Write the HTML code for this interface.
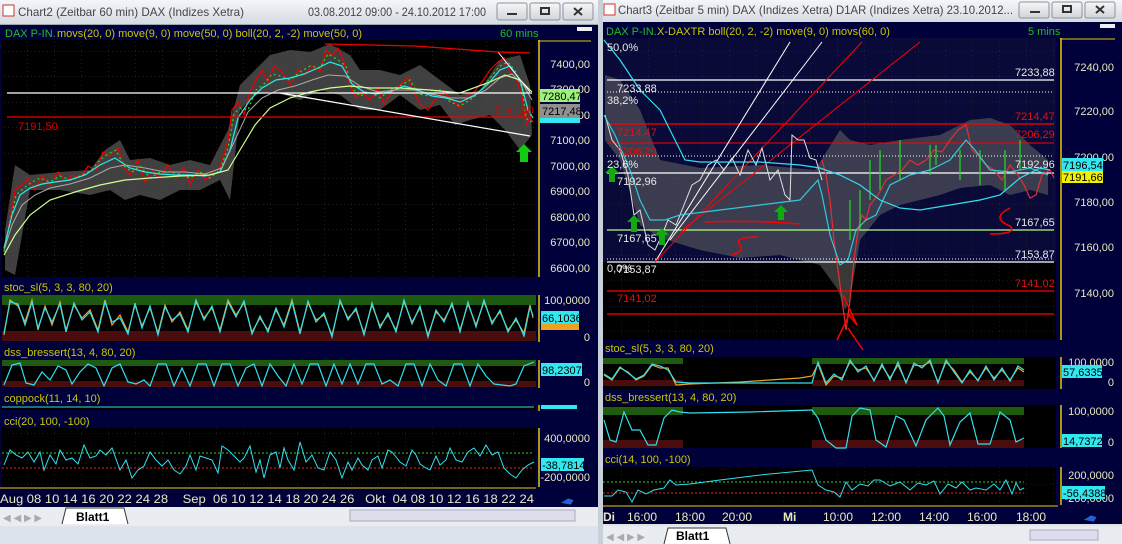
<!DOCTYPE html>
<html><head><meta charset="utf-8"><style>
html,body{margin:0;padding:0;background:#d4d0c8;}
svg{display:block;font-family:"Liberation Sans",sans-serif;}
</style></head><body>
<svg width="1122" height="544" viewBox="0 0 1122 544" xmlns="http://www.w3.org/2000/svg">
<defs>
<linearGradient id="tb" x1="0" y1="0" x2="0" y2="1"><stop offset="0" stop-color="#f4f6f9"/><stop offset="1" stop-color="#d6dbe2"/></linearGradient>
<linearGradient id="btn" x1="0" y1="0" x2="0" y2="1"><stop offset="0" stop-color="#f6f6f6"/><stop offset="1" stop-color="#d0d4da"/></linearGradient>
<pattern id="g" width="27" height="25.5" patternUnits="userSpaceOnUse"><path d="M0 0H27M0 0V25.5" stroke="#3a3a3a" stroke-width="1" stroke-dasharray="1,3" fill="none"/></pattern>
</defs>
<rect width="1122" height="544" fill="#dfe3e8"/>

<!-- ========== LEFT WINDOW ========== -->
<rect x="0" y="0" width="598" height="24" fill="url(#tb)"/>
<rect x="3" y="5" width="11" height="11" fill="#fff" stroke="#c33" stroke-width="1"/>
<text x="18" y="16" font-size="12" fill="#444" textLength="226" lengthAdjust="spacingAndGlyphs">Chart2 (Zeitbar 60 min)  DAX (Indizes Xetra)</text>
<text x="308" y="16" font-size="12" fill="#444" textLength="178" lengthAdjust="spacingAndGlyphs">03.08.2012 09:00 - 24.10.2012 17:00</text>
<g stroke="#8a929c" fill="url(#btn)"><rect x="497" y="3" width="30" height="17" rx="2"/><rect x="530" y="3" width="30" height="17" rx="2"/><rect x="563" y="3" width="30" height="17" rx="2"/></g>
<path d="M507 14h10M541 8h8v6h-8zM574 8l8 7M582 8l-8 7" stroke="#333" stroke-width="2" fill="none"/>
<rect x="0" y="24" width="598" height="483" fill="#00003a"/>
<rect x="0" y="24" width="598" height="1" fill="#9aa"/>
<text x="5" y="37" font-size="11" fill="#20c020">DAX P-IN.</text>
<text x="57" y="37" font-size="11" fill="#c8c800">movs(20, 0) move(9, 0) move(50, 0) boll(20, 2, -2) move(50, 0)</text>
<text x="500" y="37" font-size="11" fill="#20c020">60 mins</text>
<rect x="577" y="27" width="15" height="4" fill="#eee"/>
<!-- price chart -->
<rect x="2" y="40" width="534" height="237" fill="#000"/>
<rect x="2" y="40" width="534" height="237" fill="url(#g)"/>
<path d="M5 230 L15 165 L30 175 L60 172 L90 170 L105 150 L120 140 L130 160 L150 158 L170 165 L190 160 L210 165 L228 130 L240 85 L255 70 L270 55 L290 50 L310 52 L330 44 L350 55 L360 70 L380 70 L400 75 L420 65 L440 80 L460 95 L480 90 L500 60 L520 55 L530 85 L532 135 L520 150 L505 130 L490 115 L470 120 L455 125 L440 105 L420 110 L400 95 L380 110 L360 110 L340 95 L320 90 L300 100 L285 95 L270 92 L255 95 L240 110 L230 200 L220 180 L200 190 L180 190 L160 200 L140 195 L125 200 L110 190 L90 195 L60 190 L30 190 L15 275 L5 270Z" fill="#555" opacity="0.75"/>
<g stroke-width="1.2" fill="none">
<polyline points="4,250 10,220 15,190 22,185 28,178 35,190 42,175 50,185 58,172 66,182 72,175 80,178 88,166 96,170 103,152 110,156 118,148 124,168 130,175 138,160 145,182 152,170 160,178 168,165 176,178 184,168 190,185 198,170 205,180 212,172 220,168 228,140 232,110 238,102 244,115 250,92 256,80 262,70 268,82 274,66 282,72 290,85 298,70 304,75 312,66 320,72 326,50 332,55 338,48 344,62 350,85 356,98 362,92 370,100 378,88 384,104 392,92 400,85 408,78 414,92 420,104 428,110 436,98 444,92 452,100 460,108 466,96 474,92 482,82 490,70 498,62 504,58 510,72 516,78 522,96 526,125 530,118 533,122" stroke="#e00"/>
<polyline points="4,252 10,222 16,195 24,188 32,182 40,178 50,182 60,176 70,180 80,176 92,170 100,160 108,154 116,150 124,166 132,172 140,166 150,178 160,172 170,172 180,174 190,178 200,172 210,178 220,170 228,148 234,114 240,108 248,110 256,90 264,84 272,74 280,76 290,80 300,72 310,66 320,68 328,54 338,60 346,66 352,88 360,96 370,92 380,98 390,90 400,86 410,80 418,94 430,96 440,90 450,102 460,106 470,100 480,92 490,78 500,66 508,62 516,72 522,88 526,118 530,122 533,120" stroke="#2d2" stroke-dasharray="2,3"/>
<polyline points="4,248 12,215 20,195 30,188 42,184 55,182 70,180 85,175 100,165 115,158 130,168 145,172 160,174 175,175 190,175 205,176 220,172 230,150 238,118 250,100 262,88 276,80 290,78 304,74 318,68 330,62 342,66 352,84 364,92 376,94 390,92 404,86 418,90 432,96 446,98 460,102 474,96 488,84 500,70 510,66 520,80 528,110 533,118" stroke="#2ee"/>
<polyline points="4,250 12,225 22,205 35,195 50,188 70,184 90,178 110,168 125,165 145,168 165,172 185,172 205,174 222,168 235,140 248,112 262,98 278,90 295,86 312,80 328,75 345,76 360,86 378,92 396,90 414,90 432,94 450,98 468,98 486,90 500,78 512,74 524,86 532,100" stroke="#aaa" stroke-width="1"/>
<polyline points="4,255 15,235 30,215 50,200 75,192 100,185 125,180 150,178 180,176 210,175 228,170 240,150 255,125 270,108 290,98 310,92 330,88 350,86 370,88 400,88 430,90 460,93 490,82 505,75 520,80 532,92" stroke="#cfff90"/>
</g>
<line x1="7" y1="93" x2="532" y2="93" stroke="#fff" stroke-width="1.2"/>
<line x1="7" y1="117" x2="532" y2="117" stroke="#e00" stroke-width="1.2"/>
<line x1="280" y1="93" x2="530" y2="136" stroke="#fff" stroke-width="1.2"/>
<line x1="498" y1="52" x2="530" y2="92" stroke="#fff" stroke-width="1"/>
<polyline points="325,44 415,46 498,52 530,53" stroke="#e00" stroke-width="1.2" fill="none"/>
<text x="18" y="130" font-size="11" fill="#d00">7191,50</text>
<text x="494" y="114" font-size="11" fill="#d00">7191,50</text>
<path d="M520 162v-10h-4l8-8 8 8h-4v10z" fill="#1c1"/>
<!-- left price axis -->
<rect x="538" y="40" width="53" height="237" fill="#00003a"/>
<line x1="539" y1="40" x2="539" y2="277" stroke="#e8c800" stroke-width="1.5"/>
<line x1="538" y1="41" x2="591" y2="41" stroke="#e8c800"/>
<g font-size="11" fill="#e8e8c0" text-anchor="end">
<text x="590" y="68">7400,00</text><text x="590" y="93">7300,00</text><text x="590" y="119">7200,00</text><text x="590" y="144">7100,00</text><text x="590" y="170">7000,00</text><text x="590" y="195">6900,00</text><text x="590" y="221">6800,00</text><text x="590" y="246">6700,00</text><text x="590" y="272">6600,00</text>
</g>
<rect x="540" y="89" width="40" height="13" fill="#a0f080"/><text x="542" y="100" font-size="11" fill="#000">7280,47</text>
<rect x="540" y="104" width="40" height="14" fill="#909090"/><text x="542" y="115" font-size="11" fill="#000">7217,48</text>
<rect x="540" y="118" width="40" height="5" fill="#30e8f0"/>
<!-- stoc -->
<text x="4" y="291" font-size="11" fill="#c8c800">stoc_sl(5, 3, 3, 80, 20)</text>
<rect x="2" y="295" width="534" height="47" fill="#000"/>
<rect x="2" y="295" width="534" height="10" fill="#1e5a10"/>
<rect x="2" y="331" width="534" height="10" fill="#4a0c0c"/>
<polyline fill="none" stroke="#f0a020" stroke-width="1.2" points="4,335 10,300 18,306 25,322 32,300 38,330 45,306 52,325 60,302 66,330 74,305 82,318 90,310 98,330 105,300 112,325 120,315 128,332 135,305 142,326 150,308 158,333 165,305 172,322 180,312 188,330 196,302 204,318 212,308 220,330 228,300 236,315 244,303 252,332 260,318 268,330 276,310 284,325 292,300 300,332 308,303 316,320 324,315 332,335 340,302 348,318 356,310 364,333 372,305 380,326 388,315 396,330 404,302 412,322 420,308 428,335 436,312 444,320 452,305 460,330 468,304 476,325 484,302 492,322 500,312 508,330 516,320 524,333 530,305 533,318"/>
<polyline fill="none" stroke="#30e0f0" stroke-width="1.2" points="4,333 10,302 18,304 25,325 32,302 38,328 45,308 52,322 60,304 66,332 74,303 82,320 90,312 98,332 105,302 112,322 120,318 128,334 135,303 142,328 150,306 158,335 165,307 172,320 180,314 188,332 196,300 204,320 212,306 220,332 228,302 236,317 244,301 252,334 260,316 268,332 276,308 284,327 292,302 300,334 308,301 316,322 324,313 332,337 340,300 348,320 356,308 364,335 372,303 380,328 388,313 396,332 404,300 412,324 420,306 428,337 436,310 444,322 452,303 460,332 468,302 476,327 484,300 492,324 500,310 508,332 516,318 524,336 530,307 533,316"/>
<rect x="538" y="295" width="53" height="47" fill="#00003a"/>
<line x1="539" y1="295" x2="539" y2="342" stroke="#e8c800" stroke-width="1.5"/>
<text x="590" y="304" font-size="11" fill="#e8e8c0" text-anchor="end">100,0000</text>
<text x="590" y="341" font-size="11" fill="#e8e8c0" text-anchor="end">0</text>
<rect x="541" y="311" width="38" height="13" fill="#30e8f0"/><text x="542" y="322" font-size="11" fill="#000">66,1036</text>
<rect x="541" y="324" width="38" height="6" fill="#f0a020"/>
<!-- dss -->
<text x="4" y="356" font-size="11" fill="#c8c800">dss_bressert(13, 4, 80, 20)</text>
<rect x="2" y="360" width="534" height="28" fill="#000"/>
<rect x="2" y="360" width="534" height="6" fill="#1e5a10"/>
<rect x="2" y="381" width="534" height="6" fill="#4a0c0c"/>
<polyline fill="none" stroke="#30e0f0" stroke-width="1.2" points="4,385 12,365 20,363 26,383 34,385 42,372 50,380 58,366 66,370 72,384 80,372 88,364 96,368 104,386 112,368 120,364 128,382 136,384 144,380 150,386 158,364 166,364 174,386 182,368 190,386 198,364 206,364 214,386 222,364 230,364 238,386 246,368 254,364 262,386 270,364 278,376 286,386 294,364 302,384 310,364 318,364 326,386 334,364 342,384 350,364 358,384 366,364 374,364 382,384 390,380 398,386 406,364 414,364 422,386 430,364 438,380 446,386 454,364 462,364 470,386 478,364 486,376 494,384 502,385 510,386 516,384 524,366 534,362"/>
<rect x="538" y="360" width="53" height="28" fill="#00003a"/>
<line x1="539" y1="360" x2="539" y2="388" stroke="#e8c800" stroke-width="1.5"/>
<text x="590" y="386" font-size="11" fill="#e8e8c0" text-anchor="end">0</text>
<rect x="541" y="363" width="41" height="13" fill="#30e8f0"/><text x="542" y="374" font-size="11" fill="#000">98,2307</text>
<!-- coppock -->
<text x="4" y="402" font-size="11" fill="#c8c800">coppock(11, 14, 10)</text>
<rect x="2" y="405" width="534" height="5" fill="#000"/>
<line x1="2" y1="407" x2="534" y2="407" stroke="#30e0f0"/>
<rect x="538" y="405" width="53" height="6" fill="#00003a"/>
<line x1="539" y1="405" x2="539" y2="411" stroke="#e8c800" stroke-width="1.5"/>
<rect x="541" y="405" width="36" height="4" fill="#30e8f0"/>
<!-- cci -->
<text x="4" y="425" font-size="11" fill="#c8c800">cci(20, 100, -100)</text>
<rect x="2" y="428" width="534" height="59" fill="#000"/>
<rect x="2" y="428" width="534" height="59" fill="url(#g)" opacity="0.8"/>
<line x1="2" y1="453" x2="534" y2="453" stroke="#3c3" stroke-dasharray="2,2"/>
<line x1="2" y1="468" x2="534" y2="468" stroke="#e22" stroke-dasharray="2,2"/>
<polyline fill="none" stroke="#30e0f0" stroke-width="1" points="4,465 10,450 16,455 22,458 28,452 34,462 40,452 44,470 50,455 56,464 60,450 66,460 72,458 78,464 84,445 90,458 96,456 100,450 106,455 112,448 120,470 126,460 132,478 138,470 144,466 150,452 156,460 162,466 168,460 174,470 180,474 186,466 190,455 196,470 200,456 206,458 212,460 218,473 222,446 228,450 234,456 240,462 244,458 250,446 256,472 260,460 264,478 270,455 276,452 280,468 284,448 288,460 294,470 300,442 306,462 312,455 318,468 324,470 330,452 336,460 342,478 348,462 352,470 358,458 362,465 368,470 372,460 378,456 382,468 388,450 392,452 400,462 406,466 412,450 416,455 420,464 426,468 430,470 436,456 440,465 446,460 450,448 456,460 462,462 468,452 474,448 480,456 486,445 492,455 498,452 504,468 510,474 516,478 522,470 528,465 534,462"/>
<rect x="538" y="428" width="53" height="59" fill="#00003a"/>
<line x1="539" y1="428" x2="539" y2="487" stroke="#e8c800" stroke-width="1.5"/>
<text x="590" y="442" font-size="11" fill="#e8e8c0" text-anchor="end">400,0000</text>
<text x="590" y="481" font-size="11" fill="#e8e8c0" text-anchor="end">-200,0000</text>
<rect x="541" y="458" width="43" height="13" fill="#30e8f0"/><text x="542" y="469" font-size="11" fill="#000">-38,7814</text>
<!-- date axis -->
<line x1="0" y1="488" x2="536" y2="488" stroke="#e8c800"/>
<text x="0" y="503" font-size="12" fill="#e8e8c0" textLength="534" lengthAdjust="spacingAndGlyphs" xml:space="preserve">Aug 08 10 14 16 20 22 24 28    Sep  06 10 12 14 18 20 24 26   Okt  04 08 10 12 16 18 22 24</text>
<path d="M560 503l8-5 6 2-3 5z" fill="#2060e0" stroke="#000" stroke-width="0.6"/>
<!-- tab bar -->
<rect x="0" y="507" width="598" height="19" fill="#e9ecf0"/>
<text x="3" y="521" font-size="10" fill="#aaa">◀ ◀ ▶ ▶</text>
<path d="M62 524l4-16h58l4 16" fill="#fff" stroke="#333"/>
<text x="76" y="521" font-size="12" font-weight="bold" fill="#000">Blatt1</text>
<rect x="350" y="510" width="225" height="11" fill="#dde" stroke="#aab"/>
<rect x="0" y="527" width="598" height="17" fill="#dce3ec"/>
<!-- ========== RIGHT WINDOW ========== -->
<rect x="598" y="0" width="5" height="544" fill="#c8d0da"/>
<rect x="603" y="0" width="519" height="22" fill="url(#tb)"/>
<rect x="604" y="4" width="11" height="11" fill="#fff" stroke="#c33"/>
<text x="618" y="14" font-size="12" fill="#444" textLength="395" lengthAdjust="spacingAndGlyphs">Chart3 (Zeitbar 5 min)  DAX (Indizes Xetra) D1AR (Indizes Xetra) 23.10.2012...</text>
<g stroke="#8a929c" fill="url(#btn)"><rect x="1019" y="2" width="30" height="16" rx="2"/><rect x="1052" y="2" width="30" height="16" rx="2"/><rect x="1085" y="2" width="30" height="16" rx="2"/></g>
<path d="M1030 12h10M1063 6h8v6h-8zM1096 6l8 7M1104 6l-8 7" stroke="#333" stroke-width="2" fill="none"/>
<rect x="603" y="22" width="519" height="502" fill="#00003a"/>
<text x="606" y="35" font-size="11" fill="#20c020">DAX P-IN.</text>
<text x="657" y="35" font-size="11" fill="#c8c800">X-DAXTR boll(20, 2, -2) move(9, 0) movs(60, 0)</text>
<text x="1028" y="35" font-size="11" fill="#20c020">5 mins</text>
<rect x="1100" y="24" width="15" height="4" fill="#eee"/>
<!-- right price chart -->
<rect x="603" y="38" width="453" height="302" fill="#0a0a38"/>
<rect x="603" y="262" width="453" height="78" fill="#000"/>
<rect x="603" y="38" width="453" height="302" fill="url(#g)" opacity="0.8"/>
<path d="M605 75 L620 80 L640 110 L660 160 L700 168 L760 165 L815 170 L840 130 L850 140 L870 145 L900 140 L940 135 L970 120 L990 118 L1010 125 L1030 145 L1048 160 L1048 195 L1030 190 L1010 195 L990 185 L960 188 L940 195 L900 205 L880 215 L860 240 L850 300 L845 310 L838 290 L820 265 L800 260 L780 255 L740 258 L700 250 L660 238 L640 225 L620 160 L605 140Z" fill="#666" opacity="0.55"/>
<!-- fib lines -->
<line x1="607" y1="80" x2="1054" y2="80" stroke="#fff" stroke-width="1.2"/>
<line x1="607" y1="92" x2="1054" y2="92" stroke="#fff" stroke-dasharray="1,2"/>
<line x1="607" y1="124" x2="1054" y2="124" stroke="#f00" stroke-width="1.2"/>
<line x1="607" y1="143" x2="1054" y2="143" stroke="#f00"/>
<line x1="607" y1="156" x2="1054" y2="156" stroke="#fff" stroke-dasharray="1,2"/>
<line x1="607" y1="173" x2="1054" y2="173" stroke="#fff" stroke-width="1.2"/>
<line x1="607" y1="230" x2="1054" y2="230" stroke="#b0ff90" stroke-width="1.2"/>
<line x1="607" y1="259" x2="1054" y2="259" stroke="#fff" stroke-dasharray="1,2"/>
<line x1="607" y1="262" x2="1054" y2="262" stroke="#fff" stroke-width="1.2"/>
<line x1="607" y1="291" x2="1054" y2="291" stroke="#f00" stroke-width="1.2"/>
<line x1="607" y1="314" x2="1054" y2="314" stroke="#f00" stroke-width="1.2"/>
<!-- channel lines -->
<line x1="655" y1="262" x2="790" y2="42" stroke="#fff"/>
<line x1="670" y1="240" x2="822" y2="42" stroke="#fff"/>
<line x1="655" y1="262" x2="862" y2="42" stroke="#f00"/>
<line x1="680" y1="232" x2="920" y2="42" stroke="#f00"/>
<!-- price bars -->
<polyline fill="none" stroke="#e0e0e0" stroke-width="1" points="605,115 612,140 620,150 628,175 634,215 640,210 648,245 655,250 662,235 668,220 676,225 684,205 692,185 700,180 708,165 716,160 724,170 732,158 740,175 748,150 756,165 762,148 770,180 778,170 785,195 790,200 792,135 798,140 804,140 810,158 816,160 822,180"/>
<polyline fill="none" stroke="#e03030" stroke-width="1.2" points="822,160 826,175 830,200 834,240 838,270 842,300 846,330 850,300 854,260 858,230 862,215 866,220 870,205 878,195 886,180 894,175 902,170 910,160 918,165 926,160 934,150 942,152 950,140 958,130 966,125 972,150 978,155 986,165 994,170 1002,180 1010,165 1018,175 1024,185 1030,198 1036,195 1042,175 1050,170 1054,178"/>
<g stroke-width="1.2"><path d="M880 150v40M900 140v40M930 145v30M980 150v35M960 150v30M1005 150v40M1020 140v30M936 145v20M860 190v40M850 200v40M870 160v40" stroke="#2d2"/></g>
<polyline fill="none" stroke="#30e0f0" stroke-width="1.2" points="604,40 620,60 640,90 660,110 675,140 685,160 700,162 760,162 800,165 820,168 840,175 860,185 880,200 900,208 920,210 950,205 980,200 1000,195 1020,178 1040,168 1050,170"/>
<polyline fill="none" stroke="#30e0f0" stroke-width="1.2" opacity="0.85" points="604,115 615,135 630,170 640,200 650,220 665,220 680,215 720,210 760,205 800,200 818,180 822,195 830,235 840,265 848,260 856,230 866,220 876,215 890,185 910,175 930,170 950,160 966,140 975,150 990,170 1010,172 1030,168 1048,175"/>
<!-- green arrows -->
<g fill="#1a1"><path d="M609 182v-9h-4l7-7 7 7h-4v9z"/><path d="M631 232v-10h-4l7-7 7 7h-4v10z"/><path d="M659 245v-10h-4l7-7 7 7h-4v10z"/><path d="M778 220v-8h-4l7-7 7 7h-4v8z"/></g>
<!-- red hand-drawn -->
<g stroke="#f00" stroke-width="1.5" fill="none">
<path d="M705 222q50 -2 95 2"/><path d="M758 237q-25 0 -18 8 5 6 -8 10"/>
<path d="M1010 208q-20 10 0 18 8 8 -20 8"/>
<path d="M837 340l12-25 8 10-14-30M863 350l-15-22"/>
</g>
<!-- labels -->
<g font-size="11" fill="#e8e8e8">
<text x="607" y="51">50,0%</text><text x="617" y="92">7233,88</text><text x="607" y="104">38,2%</text>
<text x="607" y="168">23,6%</text><text x="617" y="185">7192,96</text><text x="617" y="242">7167,65</text>
<text x="607" y="272">0,0%</text><text x="617" y="273">7153,87</text>
<text x="1015" y="76">7233,88</text><text x="1015" y="168">7192,96</text><text x="1015" y="226">7167,65</text><text x="1015" y="258">7153,87</text>
</g>
<g font-size="11" fill="#e01010">
<text x="617" y="136">7214,47</text><text x="617" y="155">7206,29</text><text x="617" y="302">7141,02</text>
<text x="1015" y="120">7214,47</text><text x="1015" y="138">7206,29</text><text x="1015" y="287">7141,02</text>
</g>
<!-- right price axis -->
<rect x="1060" y="38" width="55" height="302" fill="#00003a"/>
<line x1="1061" y1="38" x2="1061" y2="340" stroke="#e8c800" stroke-width="1.5"/>
<line x1="1060" y1="39" x2="1115" y2="39" stroke="#e8c800"/>
<g font-size="11" fill="#e8e8c0" text-anchor="end">
<text x="1114" y="71">7240,00</text><text x="1114" y="115">7220,00</text><text x="1114" y="161">7200,00</text><text x="1114" y="206">7180,00</text><text x="1114" y="251">7160,00</text><text x="1114" y="297">7140,00</text>
</g>
<rect x="1062" y="158" width="41" height="13" fill="#30e8f0"/><text x="1063" y="169" font-size="11" fill="#000">7196,54</text>
<rect x="1062" y="171" width="41" height="12" fill="#f0f000"/><text x="1063" y="181" font-size="11" fill="#000">7191,66</text>
<!-- right stoc -->
<text x="605" y="352" font-size="11" fill="#c8c800">stoc_sl(5, 3, 3, 80, 20)</text>
<rect x="603" y="357" width="453" height="32" fill="#000"/>
<rect x="603" y="358" width="80" height="6" fill="#1e5a10"/><rect x="812" y="358" width="212" height="6" fill="#1e5a10"/>
<rect x="603" y="380" width="80" height="6" fill="#4a0c0c"/><rect x="812" y="380" width="212" height="6" fill="#4a0c0c"/>
<polyline fill="none" stroke="#f0a020" stroke-width="1.2" points="604,375 612,380 620,368 628,372 636,380 644,376 652,365 660,368 668,368 676,385 690,384 740,382 800,378 812,376 818,364 826,385 834,376 842,378 850,362 858,370 866,368 874,380 882,366 890,378 898,365 906,382 914,365 922,366 930,362 938,382 946,362 954,370 962,382 970,372 978,380 986,368 994,378 1002,370 1010,380 1018,368 1024,372"/>
<polyline fill="none" stroke="#30e0f0" stroke-width="1.2" points="604,374 612,379 620,367 628,373 636,379 644,375 652,364 660,366 668,370 676,382 690,383 740,383 800,383 812,383 818,362 826,383 834,374 842,380 850,360 858,372 866,366 874,381 882,364 890,380 898,362 906,383 914,363 922,368 930,360 938,383 946,360 954,372 962,383 970,370 978,381 986,366 994,380 1002,368 1010,381 1018,366 1024,370"/>
<rect x="1060" y="357" width="55" height="32" fill="#00003a"/>
<line x1="1061" y1="357" x2="1061" y2="389" stroke="#e8c800" stroke-width="1.5"/>
<text x="1114" y="366" font-size="11" fill="#e8e8c0" text-anchor="end">100,0000</text>
<text x="1114" y="386" font-size="11" fill="#e8e8c0" text-anchor="end">0</text>
<rect x="1062" y="365" width="40" height="13" fill="#30e8f0"/><text x="1063" y="376" font-size="11" fill="#000">57,6335</text>
<!-- right dss -->
<text x="605" y="401" font-size="11" fill="#c8c800">dss_bressert(13, 4, 80, 20)</text>
<rect x="603" y="405" width="453" height="43" fill="#000"/>
<rect x="603" y="407" width="80" height="8" fill="#1e5a10"/><rect x="812" y="407" width="212" height="8" fill="#1e5a10"/>
<rect x="603" y="440" width="80" height="8" fill="#4a0c0c"/><rect x="812" y="440" width="212" height="8" fill="#4a0c0c"/>
<polyline fill="none" stroke="#30e0f0" stroke-width="1.2" points="604,420 610,440 616,442 624,412 632,430 640,430 648,445 656,445 664,418 672,410 680,412 690,413 750,412 812,410 818,418 826,440 836,448 846,448 852,416 860,408 870,410 876,440 886,447 896,416 904,420 916,446 926,420 938,408 944,416 950,445 960,422 970,413 978,444 990,444 1000,412 1010,420 1016,442 1024,438"/>
<rect x="1060" y="405" width="55" height="43" fill="#00003a"/>
<line x1="1061" y1="405" x2="1061" y2="448" stroke="#e8c800" stroke-width="1.5"/>
<text x="1114" y="415" font-size="11" fill="#e8e8c0" text-anchor="end">100,0000</text>
<text x="1114" y="446" font-size="11" fill="#e8e8c0" text-anchor="end">0</text>
<rect x="1062" y="434" width="40" height="13" fill="#30e8f0"/><text x="1063" y="445" font-size="11" fill="#000">14,7372</text>
<!-- right cci -->
<text x="605" y="463" font-size="11" fill="#c8c800">cci(14, 100, -100)</text>
<rect x="603" y="467" width="453" height="38" fill="#000"/>
<rect x="603" y="467" width="453" height="38" fill="url(#g)" opacity="0.8"/>
<line x1="603" y1="482" x2="1024" y2="482" stroke="#3c3" stroke-dasharray="2,2"/>
<line x1="603" y1="493" x2="1024" y2="493" stroke="#e22" stroke-dasharray="2,2"/>
<polyline fill="none" stroke="#30e0f0" stroke-width="1" points="604,496 612,496 618,490 626,492 632,502 638,490 646,494 654,490 664,488 670,480 676,485 690,484 720,480 760,475 812,470 818,485 826,490 834,492 840,497 846,482 852,490 860,484 868,486 874,480 880,480 890,486 900,482 910,490 918,483 926,485 934,481 940,494 948,484 956,488 962,482 970,490 976,488 986,490 994,484 1000,490 1006,480 1012,494 1016,483 1020,490 1024,488"/>
<rect x="1060" y="467" width="55" height="38" fill="#00003a"/>
<line x1="1061" y1="467" x2="1061" y2="505" stroke="#e8c800" stroke-width="1.5"/>
<text x="1114" y="479" font-size="11" fill="#e8e8c0" text-anchor="end">200,0000</text>
<text x="1114" y="502" font-size="11" fill="#e8e8c0" text-anchor="end">-200,0000</text>
<rect x="1062" y="486" width="43" height="13" fill="#30e8f0"/><text x="1063" y="497" font-size="11" fill="#000">-56,4388</text>
<!-- right date axis -->
<line x1="603" y1="506" x2="1058" y2="506" stroke="#e8c800"/>
<g font-size="12" fill="#e8e8c0"><text x="603" y="521" font-weight="bold">Di</text><text x="627" y="521">16:00</text><text x="675" y="521">18:00</text><text x="722" y="521">20:00</text><text x="783" y="521" font-weight="bold">Mi</text><text x="823" y="521">10:00</text><text x="871" y="521">12:00</text><text x="919" y="521">14:00</text><text x="967" y="521">16:00</text><text x="1016" y="521">18:00</text></g>
<path d="M1083 520l8-5 6 2-3 5z" fill="#2060e0" stroke="#000" stroke-width="0.6"/>
<rect x="603" y="526" width="519" height="18" fill="#e9ecf0"/>
<text x="606" y="540" font-size="10" fill="#aaa">◀ ◀ ▶ ▶</text>
<path d="M664 544l4-16h58l4 16" fill="#fff" stroke="#333"/>
<text x="676" y="540" font-size="12" font-weight="bold" fill="#000">Blatt1</text>
<rect x="1030" y="530" width="68" height="10" fill="#dde" stroke="#aab"/>
</svg>
</body></html>
